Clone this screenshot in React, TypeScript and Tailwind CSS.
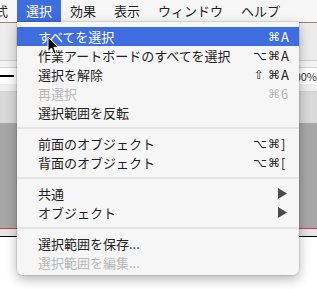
type Item =
  | { kind: "sep" }
  | {
      kind: "item";
      label: string;
      mods?: string[];
      keyChar?: string;
      disabled?: boolean;
      active?: boolean;
      submenu?: boolean;
    };

const ITEMS: Item[] = [
  { kind: "item", label: "すべてを選択", mods: ["⌘"], keyChar: "A", active: true },
  { kind: "item", label: "作業アートボードのすべてを選択", mods: ["⌥", "⌘"], keyChar: "A" },
  { kind: "item", label: "選択を解除", mods: ["⇧", "⌘"], keyChar: "A" },
  { kind: "item", label: "再選択", mods: ["⌘"], keyChar: "6", disabled: true },
  { kind: "item", label: "選択範囲を反転" },
  { kind: "sep" },
  { kind: "item", label: "前面のオブジェクト", mods: ["⌥", "⌘"], keyChar: "]" },
  { kind: "item", label: "背面のオブジェクト", mods: ["⌥", "⌘"], keyChar: "[" },
  { kind: "sep" },
  { kind: "item", label: "共通", submenu: true },
  { kind: "item", label: "オブジェクト", submenu: true },
  { kind: "sep" },
  { kind: "item", label: "選択範囲を保存..." },
  { kind: "item", label: "選択範囲を編集...", disabled: true },
];

const MENUBAR = ["形式", "選択", "効果", "表示", "ウィンドウ", "ヘルプ"];

export default function App() {
  return (
    <div
      className="relative w-[317px] h-[289px] overflow-hidden flex flex-col bg-white"
      style={{ fontFamily: '"Noto Sans CJK JP", "Liberation Sans", sans-serif' }}
    >
      {/* menu bar */}
      <div className="h-[22px] flex items-stretch bg-[#f6f6f6] text-[13px] text-[#222] ml-[-27px]">
        {MENUBAR.map((m) => (
          <div
            key={m}
            className={
              m === "選択"
                ? "px-[9px] flex items-center bg-[#3e6de0] text-white"
                : "px-[9px] flex items-center"
            }
          >
            {m}
          </div>
        ))}
      </div>

      {/* app window behind */}
      <div className="h-px bg-[#9a7f7f]" />
      <div className="h-[37px] bg-[#ececec]" />
      <div className="h-px bg-[#cfcfcf]" />
      <div className="h-[6px] bg-[#f3f3f3]" />
      <div className="h-px bg-[#d2d2d2]" />
      <div className="h-[16px] bg-white flex items-center justify-between">
        <div className="w-[14px] h-[2px] bg-black" />
        <div className="text-[11px] text-[#333] pl-[3px] border-l border-[#c8c8c8] leading-[14px]">
          00%
        </div>
      </div>
      <div className="h-[8px] bg-[#efefef] border-b border-[#d0d0d0]" />
      <div className="h-[31px] bg-[#d9d9d9]" />
      <div className="h-[105px] bg-[#a7a7a7]" />
      <div className="h-px bg-[#e3334b]" />
      <div className="h-[7px] bg-[#e6e6e6]" />
      <div className="h-px bg-black" />
      <div className="flex-1 bg-white" />

      {/* dropdown */}
      <div className="absolute left-[17px] top-[22px] w-[282px] bg-[#f6f6f6] rounded-b-[5px] pt-[5px] pb-[3px] shadow-[0_0_0_0.5px_rgba(0,0,0,0.18),0_4px_12px_rgba(0,0,0,0.3)] text-[13px]">
        {ITEMS.map((it, i) =>
          it.kind === "sep" ? (
            <div key={i} className="h-[12px] flex items-center">
              <div className="w-full h-[2px] bg-[#e4e4e4]" />
            </div>
          ) : (
            <div
              key={i}
              className={
                it.active
                  ? "h-[19px] flex items-center justify-between pl-[21px] pr-[9px] bg-[#3e6de0] text-white"
                  : it.disabled
                  ? "h-[19px] flex items-center justify-between pl-[21px] pr-[9px] text-[#b8b8b8]"
                  : "h-[19px] flex items-center justify-between pl-[21px] pr-[9px] text-[#222]"
              }
            >
              <span>{it.label}</span>
              {it.mods && (
                <span className="flex items-center">
                  <span
                    className="flex items-center gap-[3px] text-[12px]"
                    style={{ fontFamily: '"DejaVu Sans", sans-serif' }}
                  >
                    {it.mods.map((k) => (
                      <span key={k} className="w-[12px] text-center">
                        {k}
                      </span>
                    ))}
                  </span>
                  <span className="w-[10px] text-left pl-[1px]">{it.keyChar}</span>
                </span>
              )}
              {it.submenu && (
                <svg width="9" height="11" viewBox="0 0 9 11" className="mr-[3px]">
                  <polygon points="0,0 9,5.5 0,11" fill="#4a4a4a" />
                </svg>
              )}
            </div>
          )
        )}
      </div>

      {/* mouse cursor */}
      <svg
        className="absolute left-[47px] top-[36px]"
        width="13"
        height="20"
        viewBox="0 0 13 20"
      >
        <path
          d="M1 1 L1 15.5 L4.5 12 L7 18 L9.2 17 L6.8 11.3 L11.5 11.3 Z"
          fill="#000"
          stroke="#fff"
          strokeWidth="1"
          strokeLinejoin="round"
        />
      </svg>
    </div>
  );
}
